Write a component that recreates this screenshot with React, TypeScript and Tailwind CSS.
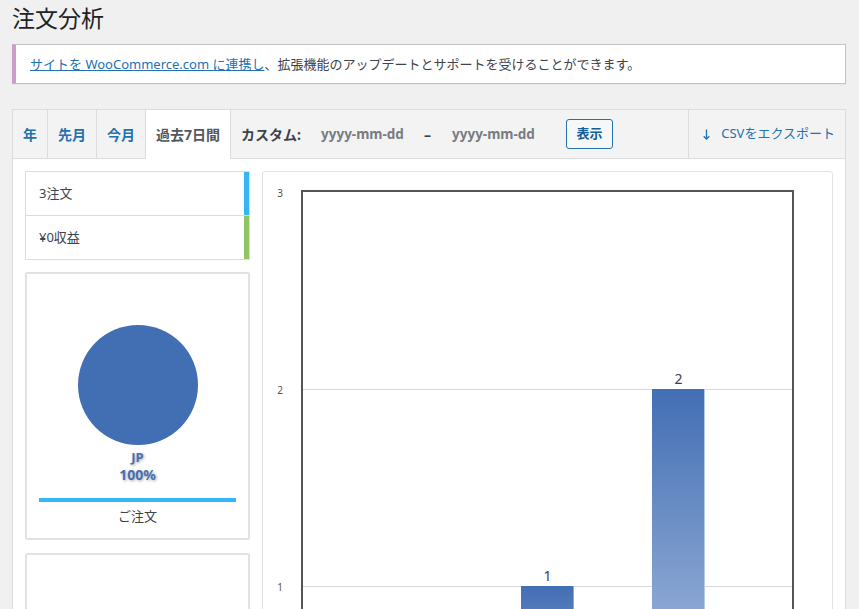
import type { ReactNode } from 'react'

function Tab({ children, active = false }: { children: ReactNode; active?: boolean }) {
  return (
    <div
      className={
        active
          ? 'flex -mb-px items-center border-r border-[#dcdcde] bg-white px-[10px] text-[14px] font-bold text-[#50575e]'
          : 'flex items-center border-r border-[#dcdcde] px-[10px] text-[14px] font-bold text-[#2271b1]'
      }
    >
      {children}
    </div>
  )
}

function BarChart() {
  return (
    <svg width="569" height="460" className="block">
      <defs>
        <linearGradient id="bar" x1="0" y1="0" x2="0" y2="1">
          <stop offset="0" stopColor="#426eb4" />
          <stop offset="1" stopColor="#c3d2ea" />
        </linearGradient>
      </defs>
      {/* grid */}
      <line x1="40" x2="529" y1="217.5" y2="217.5" stroke="#d8d8d8" strokeWidth="1" />
      <line x1="40" x2="529" y1="414.5" y2="414.5" stroke="#d8d8d8" strokeWidth="1" />
      {/* bars */}
      <rect x="258" y="414" width="53" height="197" fill="url(#bar)" />
      <rect x="389" y="217" width="53" height="394" fill="url(#bar)" />
      <line x1="441.5" x2="441.5" y1="217" y2="611" stroke="#b4c8ea" strokeWidth="1" />
      <line x1="310.5" x2="310.5" y1="414" y2="611" stroke="#8fa9d8" strokeWidth="1" />
      {/* frame */}
      <rect x="39" y="19" width="491" height="700" fill="none" stroke="#555555" strokeWidth="2" />
      {/* y axis */}
      <g fontSize="10" fill="#545454" textAnchor="end">
        <text x="20" y="25">3</text>
        <text x="20" y="222">2</text>
        <text x="20" y="419">1</text>
      </g>
      {/* values */}
      <g fontSize="14" fill="#404040" textAnchor="middle">
        <text x="284.5" y="409">1</text>
        <text x="415.5" y="212">2</text>
      </g>
    </svg>
  )
}

export default function App() {
  return (
    <div className="h-[609px] w-[859px] overflow-hidden bg-[#f0f0f1] pl-[12px] pr-[13px] font-['Noto_Sans','Noto_Sans_CJK_JP',sans-serif] text-[13px] text-[#3c434a]">
      <h1 className="pt-[3px] text-[23px] leading-[30px] font-normal text-[#1d2327]">注文分析</h1>

      {/* Notice */}
      <div className="mt-[11px] flex h-[40px] items-center border border-l-4 border-[#c3c4c7] border-l-[#cc9fcb] bg-white pl-[14px] shadow-[0_1px_1px_rgba(0,0,0,0.04)]">
        <p className="leading-[20px]">
          <a className="text-[#2271b1] underline">サイトを WooCommerce.com に連携し</a>
          、拡張機能のアップデートとサポートを受けることができます。
        </p>
      </div>

      {/* Report */}
      <div className="mt-[25px] border border-[#dcdcde] bg-white">
        <div className="flex h-[49px] items-stretch border-b border-[#dcdcde] bg-[#f3f3f3]">
          <Tab>年</Tab>
          <Tab>先月</Tab>
          <Tab>今月</Tab>
          <Tab active>過去7日間</Tab>
          <div className="flex items-center whitespace-nowrap pl-[10px]">
            <span className="w-[80px] text-[14px] font-bold text-[#3c434a]">カスタム:</span>
            <span className="w-[84px] text-[13.5px] font-bold text-[#787c82]">yyyy-mm-dd</span>
            <span className="ml-[19px] text-[14px] font-bold text-[#3c434a]">–</span>
            <span className="ml-[21px] w-[84px] text-[13.5px] font-bold text-[#787c82]">yyyy-mm-dd</span>
            <button className="ml-[30px] flex h-[30px] w-[47px] items-center justify-center rounded-[3px] border border-[#2271b1] bg-[#f6f7f7] text-[13px] font-bold text-[#135e96]">
              表示
            </button>
          </div>
          <div className="ml-auto flex items-center border-l border-[#dcdcde] pl-[14px] pr-[10px] text-[#2271b1]">
            <svg width="7" height="11" viewBox="0 0 7 11" fill="none" stroke="#2271b1" strokeWidth="1.3">
              <path d="M3.5 0.5V10" />
              <path d="M0.7 7.2L3.5 10L6.3 7.2" />
            </svg>
            <span className="ml-[11px] text-[13px]">CSVをエクスポート</span>
          </div>
        </div>

        <div className="flex gap-[12px] p-[12px]">
          {/* Left column */}
          <div className="flex w-[225px] shrink-0 flex-col">
            <div className="border border-[#dcdcde]">
              <div className="flex h-[44px] border-b border-[#dcdcde]">
                <span className="flex flex-1 items-center pl-[13px]">3注文</span>
                <span className="w-[5px] bg-[#35b6f4]" />
              </div>
              <div className="flex h-[43px]">
                <span className="flex flex-1 items-center pl-[13px]">¥0収益</span>
                <span className="w-[5px] bg-[#90c465]" />
              </div>
            </div>

            <div className="mt-[12px] flex h-[268px] flex-col items-center rounded-[2px] border-2 border-[#e2e2e2] pt-[51px]">
              <div className="h-[120px] w-[120px] rounded-full bg-[#426eb4]" />
              <div className="mt-[4px] flex flex-col items-center font-bold text-[#4a6fb2] [text-shadow:1px_1px_3px_rgba(0,0,0,0.35)]">
                <span className="text-[13px] leading-[17px]">JP</span>
                <span className="text-[14px] leading-[17px]">100%</span>
              </div>
              <div className="mt-[15px] h-[4px] w-[197px] bg-[#35b6f4]" />
              <span className="mt-[4px] leading-[20px]">ご注文</span>
            </div>

            <div className="mt-[13px] h-[200px] rounded-[2px] border-2 border-[#e2e2e2]" />
          </div>

          {/* Chart */}
          <div className="h-[460px] flex-1 overflow-hidden rounded-[3px] border border-[#e2e2e2]">
            <BarChart />
          </div>
        </div>
      </div>
    </div>
  )
}
